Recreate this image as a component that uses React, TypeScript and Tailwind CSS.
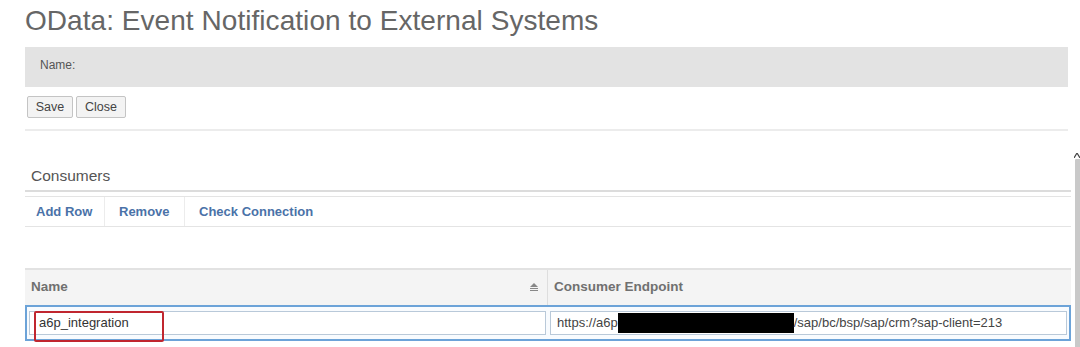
const actions = [
  { label: "Add Row", width: "w-[80px]", pad: "pl-[11px]" },
  { label: "Remove", width: "w-[80px]", pad: "pl-[14px]" },
  { label: "Check Connection", width: "w-[140px]", pad: "pl-[14px]" },
];

export default function App() {
  return (
    <div className="relative h-[347px] w-[1080px] overflow-hidden bg-white font-['Liberation_Sans',Arial,sans-serif] text-[#333]">
      <div className="ml-[25px] w-[1046px]">
        {/* ── Title ── */}
        <h1 className="pt-[4px] text-[28px] leading-[34px] tracking-[0.05px] text-[#666]">
          OData: Event Notification to External Systems
        </h1>

        {/* ── Header fields ── */}
        <div className="mt-[9px] h-[40px] w-[1043px] bg-[#e3e3e3] px-[15px] pt-[9px] text-[12px] text-[#555]">
          Name:
        </div>

        <div className="mt-[9px] flex gap-[3px] pl-[2px]">
          <button className="h-[22px] w-[46px] rounded-[2px] border border-[#c4c4c4] bg-[#f3f3f3] text-[12.5px] text-[#444]">
            Save
          </button>
          <button className="h-[22px] w-[50px] rounded-[2px] border border-[#c4c4c4] bg-[#f3f3f3] text-[12.5px] text-[#444]">
            Close
          </button>
        </div>

        <div className="mt-[11px] h-[2px] w-[1043px] bg-[#ececec]" />

        {/* ── Consumers ── */}
        <div className="flex h-[59px] items-end pb-[3px] pl-[6px] text-[15.5px] text-[#555]">
          Consumers
        </div>
        <div className="h-[2px] bg-[#dcdcdc]" />
        <div className="mt-[4px] flex h-[31px] border-y border-[#e4e4e4]">
          {actions.map((a, i) => (
            <div
              key={a.label}
              className={`${a.width} ${a.pad} flex items-center text-[13px] font-bold text-[#4a72a8] ${
                i < actions.length - 1 ? "border-r border-[#ececec]" : ""
              }`}
            >
              {a.label}
            </div>
          ))}
        </div>

        {/* ── Table ── */}
        <div className="mt-[41px] border-t-2 border-[#e2e2e2]">
          <div className="flex h-[35px] bg-[#f4f4f4] text-[13.5px] font-bold text-[#707070]">
            <div className="flex w-[523px] items-center justify-between border-r border-[#dedede] pl-[6px] pr-[8px]">
              <span>Name</span>
              <svg width="10" height="9" viewBox="0 0 10 9" aria-hidden="true">
                <path d="M5 0 L9 4 L1 4 Z" fill="#888" />
                <rect x="1" y="5" width="8" height="1" fill="#888" />
                <rect x="1" y="7" width="8" height="1" fill="#888" />
              </svg>
            </div>
            <div className="flex items-center pl-[6px]">Consumer Endpoint</div>
          </div>

          <div className="relative flex h-[36px] items-center gap-[4px] border-2 border-[#6ca3d8] bg-[#f8fbfe] px-[2px]">
            <div className="flex h-[24px] w-[517px] items-center border border-[#b9c9d9] bg-white pl-[9px] text-[13px] text-[#333]">
              a6p_integration
            </div>
            <div className="flex h-[24px] flex-1 items-center border border-[#b9c9d9] bg-white pl-[6px] text-[13px] text-[#444]">
              <span>https://a6p</span>
              <span className="h-[20px] w-[176px] bg-black" />
              <span>/sap/bc/bsp/sap/crm?sap-client=213</span>
            </div>
            {/* highlight box */}
            <div className="pointer-events-none absolute left-[7px] top-[4px] h-[31px] w-[130px] rounded-[2px] border-2 border-[#c0262f]" />
          </div>
        </div>
      </div>

      {/* ── Scrollbar ── */}
      <div className="absolute right-0 top-[153px] flex flex-col items-center">
        <svg width="6" height="5" viewBox="0 0 6 5" aria-hidden="true">
          <path d="M0 5 L3 0 L6 5" fill="none" stroke="#444" strokeWidth="1.2" />
        </svg>
        <div className="mt-[1px] h-[190px] w-[5px] rounded-l-[1px] bg-[#c9c9c9]" />
      </div>
    </div>
  );
}
